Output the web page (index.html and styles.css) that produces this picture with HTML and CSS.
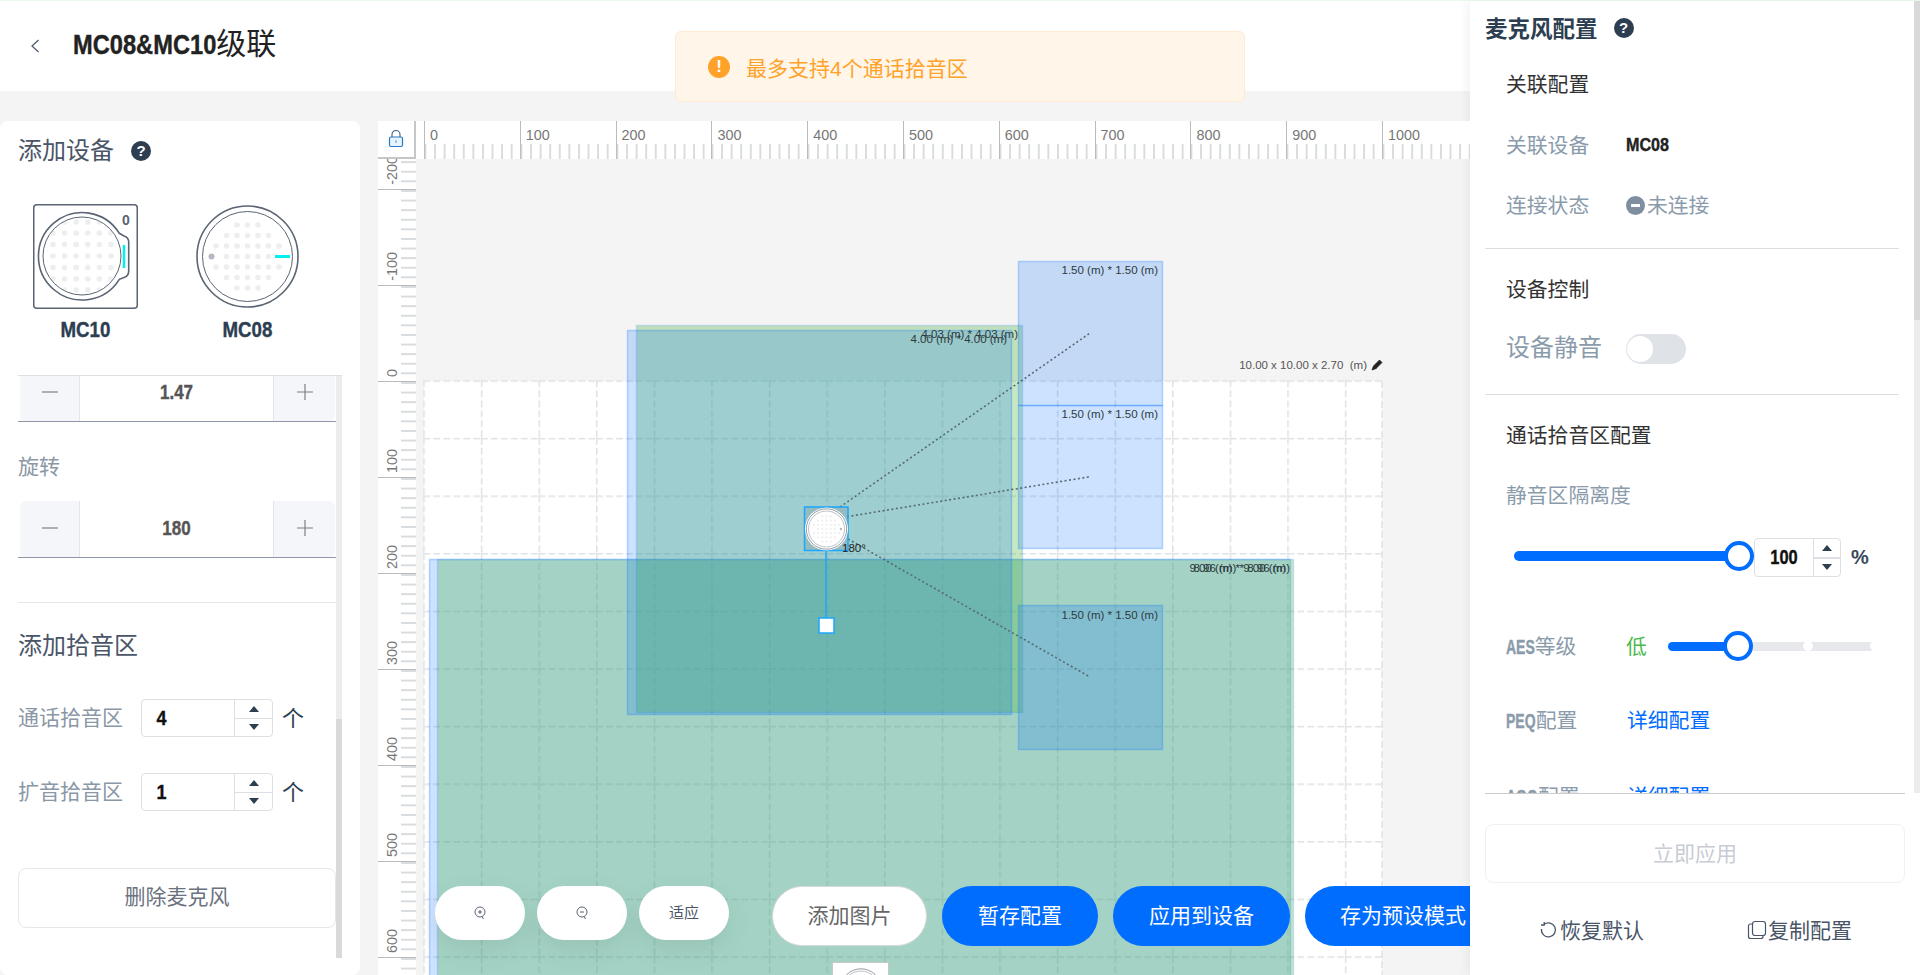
FILE: index.html
```html
<!DOCTYPE html>
<html lang="zh-CN">
<head>
<meta charset="utf-8">
<title>MC08&amp;MC10级联</title>
<link rel="stylesheet" href="styles.css">
</head>
<body>
<svg class="defs" width="0" height="0" aria-hidden="true">
  <defs>
    <symbol id="mic08" viewBox="0 0 105 105">
      <circle cx="52.5" cy="52.5" r="50.5" class="mic-line" stroke-width="1.6"/>
      <circle cx="52.5" cy="52.5" r="45" class="mic-line" stroke-width="1"/>
      <path class="mic-dots" d="M42 21H63.1M31.5 31.5H73.6M21 42H84.1M31.5 52.5H73.6M21 63H84.1M31.5 73.5H73.6M42 84H63.1"/>
      <circle cx="16.5" cy="52.5" r="3" fill="#b4b8c0"/>
    </symbol>
  </defs>
</svg>
<div class="app">
  <div class="content">
    <header class="header">
      <svg class="back" width="10" height="14" viewBox="0 0 10 14"><path d="M8.500 1L2 7l6.500 6" fill="none" stroke="#4a5568" stroke-width="1.200"/></svg>
      <h1 class="page-title"><span class="nb title-latin">MC08&amp;MC10</span>级联</h1>
    </header>
    <div class="alert"><span class="warn">!</span><span>最多支持4个通话拾音区</span></div>
    <main class="main">
      <section class="left">
        <div class="left-title"><span>添加设备</span><span class="help">?</span></div>
        <div class="devices">
          <div class="device">
            <svg width="105" height="105" viewBox="0 0 105 105">
              <defs><clipPath id="mc10clip"><circle cx="49" cy="52" r="38"/></clipPath></defs>
              <rect x="0.750" y="0.750" width="103.500" height="103.500" rx="3" class="mic-line" stroke-width="1.500"/>
              <path class="mic-line" stroke-width="1.600" d="M86.300 75.300A43.700 43.700 0 1 1 86.300 29.300L91 32Q95.700 33.500 95.700 38V67Q95.700 72 91 73.500Z"/>
              <circle cx="49" cy="52" r="39" class="mic-line" stroke-width="1"/>
              <path clip-path="url(#mc10clip)" class="mic-dots dots10" d="M20 18H78.500M20 29H78.500M20 40.500H78.500M20 52H78.500M20 63.500H78.500M20 75H78.500M20 86H78.500"/>
              <path d="M91 41V64" stroke="#00f0f0" stroke-width="2.500"/>
              <text x="93" y="21" class="mic-zero">0</text>
            </svg>
            <div class="device-name nb">MC10</div>
          </div>
          <div class="device">
            <svg width="105" height="105" viewBox="0 0 105 105">
              <use href="#mic08" width="105" height="105"/>
              <path d="M80 52.500H95" stroke="#00f0f0" stroke-width="3"/>
            </svg>
            <div class="device-name nb">MC08</div>
          </div>
        </div>
        <div class="left-scroll">
          <div class="left-body">
            <div class="stepper stepper-cut">
              <span class="step-btn"><svg width="16" height="16" viewBox="0 0 16 16"><path d="M0 8H16" class="step-ic"/></svg></span>
              <span class="step-val nb">1.47</span>
              <span class="step-btn step-plus"><svg width="16" height="16" viewBox="0 0 16 16"><path d="M0 8H16M8 0V16" class="step-ic"/></svg></span>
            </div>
            <div class="field-label rotate-label">旋转</div>
            <div class="stepper">
              <span class="step-btn"><svg width="16" height="16" viewBox="0 0 16 16"><path d="M0 8H16" class="step-ic"/></svg></span>
              <span class="step-val nb">180</span>
              <span class="step-btn step-plus"><svg width="16" height="16" viewBox="0 0 16 16"><path d="M0 8H16M8 0V16" class="step-ic"/></svg></span>
            </div>
            <div class="left-divider"></div>
            <div class="section-title">添加拾音区</div>
            <div class="zone-row zone-first">
              <span class="zone-label">通话拾音区</span>
              <span class="num-input"><span class="num-val nb">4</span><span class="spin"><i class="up"></i><i class="down"></i></span></span>
              <span class="unit">个</span>
            </div>
            <div class="zone-row zone-second">
              <span class="zone-label">扩音拾音区</span>
              <span class="num-input"><span class="num-val nb">1</span><span class="spin"><i class="up"></i><i class="down"></i></span></span>
              <span class="unit">个</span>
            </div>
            <button class="delete-btn">删除麦克风</button>
          </div>
          <div class="scrollbar left-bar"><div class="thumb left-thumb"></div></div>
        </div>
      </section>

      <section class="canvas">
        <div class="ruler-corner">
          <svg width="16" height="18" viewBox="0 0 16 18"><path d="M4 7.500V4.500a4 4 0 0 1 8 0V7.500" fill="none" stroke="#4a6a8a" stroke-width="1.200"/><rect x="1.500" y="7" width="13" height="9.500" rx="1.500" fill="#e8f4ff" stroke="#2b78c2" stroke-width="1.200"/><path d="M8 10V13" stroke="#5aa9e6" stroke-width="1.200"/></svg>
        </div>
        <div class="ruler-top">
          <div class="rt">0</div><div class="rt">100</div><div class="rt">200</div><div class="rt">300</div><div class="rt">400</div><div class="rt">500</div><div class="rt">600</div><div class="rt">700</div><div class="rt">800</div><div class="rt">900</div><div class="rt">1000</div>
        </div>
        <div class="ruler-left">
          <div class="rl"><span>-200</span></div><div class="rl"><span>-100</span></div><div class="rl"><span>0</span></div><div class="rl"><span>100</span></div><div class="rl"><span>200</span></div><div class="rl"><span>300</span></div><div class="rl"><span>400</span></div><div class="rl"><span>500</span></div><div class="rl"><span>600</span></div><div class="rl"></div>
        </div>
        <svg class="stage" width="1092" height="854" viewBox="378 121 1092 854">
          <defs>
            <pattern id="grid" patternUnits="userSpaceOnUse" x="423.250" y="380.250" width="57.600" height="57.600">
              <path d="M0 0.750H57.600M0.750 0V57.600" fill="none" stroke="#e0e2e5" stroke-width="1.500" stroke-dasharray="7 3"/>
            </pattern>
          </defs>
          <rect x="424" y="381" width="958" height="958" fill="#fff"/>
          <rect x="423" y="380" width="959" height="959" fill="url(#grid)"/>
          <path d="M1382 381V975" stroke="#e0e2e5" stroke-width="1.500" stroke-dasharray="7 3"/>
          <text x="1367" y="369" class="room-label">10.00 x 10.00 x 2.70  (m)</text>
          <path d="M1372 370l1.500-4 6-6 2.500 2.500-6 6zM1374 366l2.500 2.500" fill="#222" stroke="#222" stroke-width="0.800"/>

          <rect x="429.500" y="559.500" width="861" height="500" class="zone-blue"/>
          <rect x="437.500" y="559.500" width="856" height="500" class="zone-green"/>
          <text x="1286" y="572" class="zone-text">9.00 (m) * 9.00 (m)</text>
          <text x="1290" y="572" class="zone-text">8.96 (m) * 8.96 (m)</text>

          <rect x="636.500" y="325.500" width="386" height="387" class="zone-green"/>
          <rect x="627.500" y="330.500" width="384" height="384" class="zone-blue"/>
          <text x="1007" y="343" class="zone-text">4.00 (m) * 4.00 (m)</text>
          <text x="1018" y="338" class="zone-text">4.03 (m) * 4.03 (m)</text>

          <rect x="1018.500" y="261.500" width="144" height="144" class="zone-blue"/>
          <rect x="1018.500" y="405.500" width="144" height="143" class="zone-blue"/>
          <rect x="1018.500" y="605.500" width="144" height="144" class="zone-blue"/>
          <text x="1158" y="274" class="zone-text">1.50 (m) * 1.50 (m)</text>
          <text x="1158" y="418" class="zone-text">1.50 (m) * 1.50 (m)</text>
          <text x="1158" y="619" class="zone-text">1.50 (m) * 1.50 (m)</text>

          <path d="M840 507L1090.500 332.700M847 516.700L1090 476.700M848 539L1090 677" class="sight"/>

          <rect x="804.500" y="507" width="43.500" height="43.500" class="mic-box"/>
          <circle cx="826.500" cy="529" r="21.500" fill="#fff"/>
          <use href="#mic08" x="805.500" y="508" width="42" height="42" transform="rotate(180 826.500 529)"/>
          <text x="842" y="552" class="angle">180°</text>
          <path d="M826 551V617" stroke="#1aa7ff" stroke-width="1.500"/>
          <rect x="819" y="618" width="15" height="15" fill="#fff" stroke="#1aa7ff" stroke-width="1.500"/>

          <rect x="832.500" y="962.500" width="56" height="40" fill="#fff" stroke="#c8c8c8"/>
          <use href="#mic08" x="840" y="968" width="42" height="42"/>
        </svg>
        <div class="tools">
          <button class="pill pill-sm"><svg width="14" height="16" viewBox="0 0 14 16"><circle cx="7" cy="7" r="5" fill="none" stroke="#5a6472"/><path d="M5 7H9M7 5V9M9 11.500L10.500 14" fill="none" stroke="#5a6472"/></svg></button>
          <button class="pill pill-sm"><svg width="14" height="16" viewBox="0 0 14 16"><circle cx="7" cy="7" r="5" fill="none" stroke="#5a6472"/><path d="M5 7H9M9 11.500L10.500 14" fill="none" stroke="#5a6472"/></svg></button>
          <button class="pill pill-sm pill-fit">适应</button>
          <button class="pill pill-lg pill-white">添加图片</button>
          <button class="pill pill-lg pill-blue pill-a">暂存配置</button>
          <button class="pill pill-lg pill-blue pill-b">应用到设备</button>
          <button class="pill pill-lg pill-blue pill-c">存为预设模式</button>
        </div>
      </section>
    </main>
  </div>

  <aside class="aside">
    <div class="aside-scroll">
      <div class="aside-body">
        <div class="aside-title"><span class="aside-title-text">麦克风配置</span><span class="help">?</span></div>
        <div class="sub sub-a">关联配置</div>
        <div class="prop prop-a"><span class="prop-label">关联设备</span><span class="nb prop-device">MC08</span></div>
        <div class="prop prop-b"><span class="prop-label">连接状态</span><span class="status"><i class="status-ic"></i><span class="status-text">未连接</span></span></div>
        <div class="divider divider-a"></div>
        <div class="sub sub-b">设备控制</div>
        <div class="prop prop-c"><span class="prop-label mute-label">设备静音</span><span class="toggle"><i></i></span></div>
        <div class="divider divider-b"></div>
        <div class="sub sub-c">通话拾音区配置</div>
        <div class="prop prop-d"><span class="prop-label">静音区隔离度</span></div>
        <div class="iso-row">
          <div class="iso-slider"><span class="iso-fill"></span><span class="knob iso-knob"></span></div>
          <span class="num-input iso-input"><span class="iso-val nb">100</span><span class="spin"><i class="up"></i><i class="down"></i></span></span>
          <span class="percent">%</span>
        </div>
        <div class="prop prop-aes">
          <span class="prop-label"><b class="nb">AES</b>等级</span>
          <span class="aes-low">低</span>
          <div class="aes-track"><span class="aes-fill"></span><span class="aes-dot aes-dot1"></span><span class="aes-dot aes-dot2"></span><span class="knob aes-knob"></span></div>
        </div>
        <div class="prop prop-peq"><span class="prop-label"><b class="nb">PEQ</b>配置</span><span class="link">详细配置</span></div>
        <div class="prop prop-agc"><span class="prop-label"><b class="nb">AGC</b>配置</span><span class="link">详细配置</span></div>
      </div>
      <div class="scrollbar aside-bar"><div class="thumb aside-thumb"></div></div>
    </div>
    <div class="aside-foot">
      <button class="apply-btn">立即应用</button>
      <div class="actions">
        <span class="action"><svg width="18" height="18" viewBox="0 0 18 18"><path d="M5 3.500A7 7 0 1 1 2.500 8M5.200 1V4H2" fill="none" stroke="#4a5568" stroke-width="1.300"/></svg><span class="action-text">恢复默认</span></span>
        <span class="action action-copy"><svg width="20" height="20" viewBox="0 0 20 20"><rect x="5.500" y="1.500" width="13" height="14" rx="2.500" fill="none" stroke="#4a5568" stroke-width="1.200"/><path d="M5 4H3.500A2 2 0 0 0 1.500 6V16.500A2 2 0 0 0 3.500 18.500H14A2 2 0 0 0 16 16.500V16" fill="none" stroke="#4a5568" stroke-width="1.200"/></svg><span class="action-text">复制配置</span></span>
      </div>
    </div>
  </aside>
</div>
</body>
</html>
```
FILE: styles.css
```css
* { box-sizing: border-box; }
html, body { margin: 0; padding: 0; height: 100%; overflow: hidden; }
body { font-family: "Liberation Sans", "Noto Sans CJK SC", sans-serif; background: #f4f4f4; color: #2c3e50; }
button { font-family: inherit; cursor: pointer; }
.defs { position: absolute; }
/* condensed bold latin used by the product: squeezed Arial-metric bold */
.nb { display: inline-block; font-weight: 700; white-space: nowrap; -webkit-text-stroke: 0.4px currentColor; }
.app { display: flex; width: 1920px; height: 975px; border-top: 1px solid #eef9ee; }
.content { position: relative; width: 1470px; flex: none; display: flex; flex-direction: column; }

.header { height: 90px; flex: none; background: #fff; display: flex; align-items: center; padding-left: 30px; }
.back { flex: none; }
.page-title { margin: 0 0 4px 33px; font-size: 30px; font-weight: 400; line-height: 36px; color: #222; }
.title-latin { font-size: 28px; color: #222; transform: scaleX(0.845); transform-origin: left center; margin-right: -26.300px; }

.alert { position: absolute; left: 675px; top: 30px; width: 570px; height: 71px; background: #fff5e8; border: 1px solid #fdebd3; border-radius: 6px; display: flex; align-items: center; padding-left: 32px; gap: 16px; color: #ffa229; font-size: 21px; }
.warn { width: 22px; height: 22px; border-radius: 50%; background: #ffa229; color: #fff; font-size: 17px; font-weight: 700; line-height: 22px; text-align: center; flex: none; }

.main { flex: 1; display: flex; gap: 18px; padding-top: 30px; min-height: 0; }

.left { width: 360px; flex: none; background: #fff; border-radius: 8px; padding-left: 18px; display: flex; flex-direction: column; }
.left-title { display: flex; align-items: center; gap: 17px; font-size: 24px; line-height: 30px; margin-top: 15px; color: #4a5568; height: 30px; }
.help { width: 20px; height: 20px; border-radius: 50%; background: #2c3e50; color: #fff; font-size: 15px; font-weight: 700; line-height: 20px; text-align: center; flex: none; }
.devices { display: flex; gap: 57px; padding-left: 15px; margin-top: 38px; }
.device { width: 105px; display: flex; flex-direction: column; align-items: center; gap: 9px; }
.device svg { display: block; }
.device-name { font-size: 22px; line-height: 24px; color: #2c3e50; transform: scaleX(0.85); }
.mic-line { fill: none; stroke: #5a6472; }
.mic-dots { fill: none; stroke: #eeeeee; stroke-width: 5.6; stroke-linecap: round; stroke-dasharray: 0 10.5; }
.dots10 { stroke-dasharray: 0 11.6; }
.mic-zero { font-family: "Liberation Sans", sans-serif; font-size: 14px; font-weight: 700; fill: #5a6472; text-anchor: middle; }

.left-scroll { margin-top: 33px; flex: none; height: 583px; width: 324px; display: flex; border-top: 1px solid #dcdfe4; }
.left-body { width: 318px; flex: none; overflow: hidden; }
.scrollbar { background: #ececec; width: 6px; flex: none; display: flex; flex-direction: column; }
.thumb { background: #d9d9d9; }
.left-thumb { margin-top: auto; height: 239px; }

.stepper { height: 57px; display: flex; padding-left: 2px; border-bottom: 1.5px solid #8a97a6; }
.stepper-cut { margin-top: -11px; }
.step-btn { width: 60px; background: #f5f6fa; border-right: 1px solid #e2e5ea; border-radius: 6px 0 0 6px; display: flex; align-items: center; justify-content: center; flex: none; padding-bottom: 2px; }
.step-plus { width: 62px; border-right: 0; border-left: 1px solid #e2e5ea; border-radius: 0 6px 6px 0; margin-right: 1px; }
.step-ic { fill: none; stroke: #7b7f86; stroke-width: 1.200; }
.step-val { flex: 1; text-align: center; font-size: 20px; line-height: 54px; color: #555; transform: scaleX(0.85); }
.field-label { font-size: 21px; line-height: 30px; color: #8a97a6; }
.rotate-label { margin-top: 30px; margin-bottom: 19px; }
.left-divider { height: 1px; background: #e4e7ec; margin-top: 44px; }
.section-title { font-size: 24px; line-height: 32px; margin-top: 27px; color: #4a5568; }
.zone-row { display: flex; align-items: center; height: 38px; }
.zone-first { margin-top: 37px; }
.zone-second { margin-top: 36px; }
.zone-label { width: 123px; flex: none; font-size: 21px; color: #8a97a6; padding-bottom: 4px; }
.num-input { width: 132px; height: 38px; flex: none; border: 1px solid #dcdfe4; border-radius: 4px; display: flex; align-items: center; background: #fff; }
.num-val { flex: 1; padding-left: 16px; font-size: 20px; color: #111; transform: scaleX(0.9); transform-origin: left center; }
.spin { width: 38px; height: 100%; flex: none; border-left: 1px solid #dcdfe4; display: flex; flex-direction: column; }
.spin i { flex: 1; display: flex; align-items: center; justify-content: center; }
.spin i::before { content: ""; border-left: 5.5px solid transparent; border-right: 5.500px solid transparent; }
.spin .up { border-bottom: 1px solid #dcdfe4; }
.spin .up::before { border-bottom: 6px solid #2c3e50; }
.spin .down::before { border-top: 6px solid #2c3e50; }
.unit { margin-left: 9px; font-size: 22px; color: #2c3e50; padding-bottom: 4px; }
.delete-btn { display: block; width: 100%; height: 60px; margin-top: 57px; padding: 0 0 6px; background: #fff; border: 1px solid #e4e7ec; border-radius: 8px; font-size: 21px; color: #6b7280; }

.canvas { position: relative; width: 1092px; flex: none; overflow: hidden; }
.stage { position: absolute; left: 0; top: 0; display: block; }
.ruler-corner { position: absolute; left: 0; top: 0; width: 38px; height: 38px; background: #fff; border-right: 2px solid #c4c6c8; border-bottom: 2px solid #c4c6c8; display: flex; align-items: center; justify-content: center; z-index: 2; }
.ruler-top { position: absolute; left: 38px; top: 0; right: 0; height: 38px; background: #fff; padding-left: 8px; display: flex; z-index: 1; }
.rt { width: 95.800px; flex: none; height: 38px; border-left: 1.5px solid #bcbcbc; padding: 4px 0 0 5px; font-size: 14.400px; line-height: 20px; color: #777; background: linear-gradient(90deg, #d8dcdf 1.6px, transparent 0) -0.5px bottom / 9.58px 15px repeat-x; }
.ruler-left { position: absolute; left: 0; top: 38px; bottom: 0; width: 38px; background: #fff; overflow: hidden; z-index: 1; }
.rl { height: 96px; border-bottom: 1.5px solid #bcbcbc; position: relative; font-size: 14.400px; color: #777; display: flex; align-items: flex-end; justify-content: flex-start; padding: 0 0 4px 5px; background: linear-gradient(#d8dcdf 1.6px, transparent 0) right 0 / 15px 9.6px repeat-y; }
.rl:first-child { margin-top: -65px; }
.rl span { writing-mode: vertical-rl; transform: rotate(180deg); line-height: 18px; white-space: nowrap; }

.zone-blue { fill: rgba(0, 110, 255, 0.2); stroke: rgba(0, 110, 255, 0.26); stroke-width: 1.5; }
.zone-green { fill: rgba(82, 181, 76, 0.32); stroke: rgba(0, 110, 255, 0.16); stroke-width: 1.5; }
.zone-text { font-family: "Liberation Sans", sans-serif; font-size: 11.500px; fill: #2e3a3e; text-anchor: end; }
.room-label { font-family: "Liberation Sans", sans-serif; font-size: 11.500px; fill: #555; text-anchor: end; white-space: pre; }
.sight { fill: none; stroke: #566a70; stroke-width: 1.600; stroke-dasharray: 2 2.500; }
.mic-box { fill: rgba(120, 130, 135, 0.25); stroke: #1aa7ff; stroke-width: 1.500; }
.angle { font-family: "Liberation Sans", sans-serif; font-size: 11.500px; fill: #222; }

.tools { position: absolute; left: 57px; top: 765px; display: flex; align-items: flex-start; gap: 12px; }
.pill { border: 0; flex: none; display: flex; align-items: center; justify-content: center; padding: 0; }
.pill-sm { width: 90px; height: 54px; border-radius: 27px; background: #fff; box-shadow: 0 10px 28px rgba(0, 0, 0, 0.08); font-size: 15px; color: #4a5568; }
.pill-fit { padding-bottom: 3px; }
.pill-lg { height: 60px; border-radius: 30px; font-size: 21px; padding-bottom: 4px; }
.pill-white { width: 155px; margin-left: 31px; background: #fff; border: 1px solid #d8d8d8; color: #666; }
.pill-blue { background: #016dff; color: #fff; }
.pill-a { width: 156px; margin-left: 3px; }
.pill-b { width: 177px; margin-left: 3px; }
.pill-c { width: 200px; margin-left: 3px; padding-right: 4px; }

.aside { width: 450px; flex: none; background: #fff; box-shadow: -3px 0 10px rgba(0, 0, 0, 0.05); position: relative; display: flex; flex-direction: column; }
.aside-scroll { height: 792px; flex: none; display: flex; }
.aside-body { width: 444px; flex: none; padding: 11px 15px 0 15px; overflow: hidden; }
.aside-bar { height: 792px; }
.aside-thumb { height: 319px; }
.aside-title { display: flex; align-items: center; gap: 16px; height: 32px; font-size: 22.500px; font-weight: 700; color: #2c3e50; }
.aside-title-text { padding-bottom: 2px; }
.sub { padding-left: 21px; font-size: 20.800px; line-height: 30px; color: #333; }
.sub-a { margin-top: 26px; }
.sub-b { margin-top: 26px; }
.sub-c { margin-top: 26px; }
.prop { padding-left: 21px; display: flex; align-items: center; height: 30px; font-size: 20.800px; color: #8a9bab; }
.prop-label { width: 120px; flex: none; white-space: nowrap; padding-bottom: 3px; }
.prop-label b { font-size: 20px; transform: scaleX(0.7); transform-origin: left center; margin-right: -12.500px; }
.prop-a { margin-top: 30px; }
.prop-b { margin-top: 30px; }
.prop-c { margin-top: 29px; }
.prop-d { margin-top: 29px; }
.prop-device { font-size: 19px; color: #222; transform: scaleX(0.85); transform-origin: left center; }
.status { display: flex; align-items: center; gap: 2px; }
.status-text { padding-bottom: 3px; }
.status-ic { width: 19px; height: 19px; border-radius: 50%; background: #7f8fa0; position: relative; flex: none; }
.status-ic::before { content: ""; position: absolute; left: 5px; right: 5px; top: 8px; height: 3px; background: #fff; }
.divider { height: 1px; background: #dedede; }
.divider-a { margin-top: 28px; }
.divider-b { margin-top: 30px; }
.mute-label { font-size: 24px; padding-bottom: 7px; }
.toggle { width: 60px; height: 30px; border-radius: 15px; background: #dfe3e8; display: flex; align-items: center; padding-left: 1px; }
.toggle i { width: 26px; height: 26px; border-radius: 50%; background: #fff; }

.iso-row { margin-top: 28px; margin-left: 29px; display: flex; align-items: center; height: 39px; }
.iso-slider { width: 240px; display: flex; align-items: center; flex: none; margin-bottom: 4px; }
.iso-fill { width: 216px; height: 10px; background: #016dff; border-radius: 5px; flex: none; }
.knob { width: 30px; height: 30px; border-radius: 50%; background: #fff; border: 4px solid #016dff; flex: none; }
.iso-knob { margin-left: -6px; }
.iso-input { width: 87px; height: 39px; }
.iso-val { flex: 1; text-align: center; font-size: 20px; color: #111; transform: scaleX(0.82); }
.iso-input .spin { width: 27px; }
.iso-input .spin .up { border-bottom-width: 2px; }
.percent { margin-left: 10px; font-size: 20px; font-weight: 700; color: #3a4a5a; }
.prop-aes { margin-top: 54px; }
.aes-low { width: 42px; flex: none; color: #4cb84c; padding-bottom: 3px; }
.aes-track { position: relative; width: 207px; height: 9px; background: #e6e8eb; border-radius: 5px; flex: none; }
.aes-fill { position: absolute; left: 0; top: 0; width: 70px; height: 9px; background: #016dff; border-radius: 5px; }
.aes-dot { position: absolute; top: -0.500px; width: 10px; height: 10px; border-radius: 50%; background: #fff; }
.aes-dot1 { left: 135px; }
.aes-dot2 { left: 202px; }
.aes-knob { position: absolute; left: 55px; top: -10.500px; }
.prop-peq { margin-top: 44px; }
.prop-agc { margin-top: 46px; }
.link { color: #016dff; padding: 0 0 3px 1px; }

.aside-foot { margin: 0 15px; flex: 1; border-top: 1px solid #cccccc; }
.apply-btn { display: block; width: 420px; height: 59px; margin-top: 30px; padding: 0 0 4px; background: #fff; border: 1px solid #f0f0f0; border-radius: 8px; font-size: 21px; color: #c8ccd4; }
.actions { display: flex; margin-top: 32px; padding-left: 54px; gap: 103px; height: 30px; }
.action { display: flex; align-items: center; gap: 3px; font-size: 21px; color: #4a5568; }
.action-text { padding-bottom: 3px; }
.action-copy { gap: 1px; }
```
